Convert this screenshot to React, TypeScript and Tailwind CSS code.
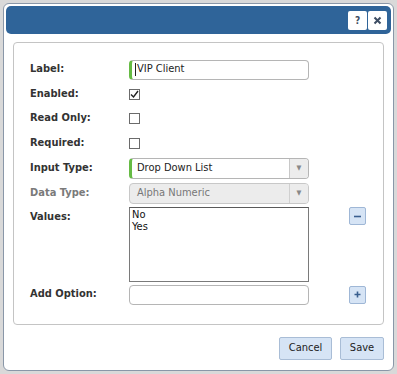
import React from 'react';

const font = { fontFamily: 'Tahoma, "DejaVu Sans Condensed", "DejaVu Sans", sans-serif' };

const Row = ({ label, h, muted, top, children, side }: any) => (
    <div className={`flex ${top ? 'items-start' : 'items-center'}`} style={{ height: h }}>
        <div className={`w-[99px] shrink-0 text-[11px] font-bold ${muted ? 'text-[#7a7a7a]' : 'text-[#333]'} ${top ? 'pt-[3px]' : ''}`}>
            {label}
        </div>
        <div className="w-[180px] shrink-0">{children}</div>
        {side && <div className={`ml-[40px] ${top ? 'pt-[1px]' : ''}`}>{side}</div>}
    </div>
);

const Check = ({ checked }: { checked?: boolean }) => (
    <div className="w-[11px] h-[11px] border border-[#6b6b6b] bg-white flex items-center justify-center">
        {checked && (
            <svg width="9" height="9" viewBox="0 0 9 9">
                <path d="M1 4.5 L3.5 7 L8 1" fill="none" stroke="#222" strokeWidth="1.4" />
            </svg>
        )}
    </div>
);

const Select = ({ value, disabled }: any) => (
    <div className={`flex h-[21px] rounded-[4px] border ${disabled ? 'border-[#c8c8c8] bg-[#ececec]' : 'border-[#b5b5b5] border-l-[3px] border-l-[#66bb44] bg-white'} overflow-hidden`}>
        <div className={`flex-1 flex items-center ${disabled ? 'pl-[7px] text-[#777]' : 'pl-[5px] text-[#222]'} text-[11px]`}>{value}</div>
        <div className={`w-[19px] border-l ${disabled ? 'border-[#d0d0d0]' : 'border-[#c8c8c8]'} bg-[#ececec] flex items-center justify-center text-[7px] text-[#888]`}>▼</div>
    </div>
);

const SmallBtn = ({ plus }: { plus?: boolean }) => (
    <div className="w-[17px] h-[18px] rounded-[2px] border border-[#9fb7d6] bg-[#d6e4f5] flex items-center justify-center">
        <svg width="9" height="9" viewBox="0 0 9 9">
            <path d={plus ? 'M4.5 1.5 V7.5 M1.5 4.5 H7.5' : 'M1 4.5 H8'} stroke="#3a5f8f" strokeWidth="1.6" />
        </svg>
    </div>
);

export default function App() {
    return (
        <div className="w-[397px] h-[374px] bg-[#d9d9d9] p-[3px]" style={font}>
            <div className="h-[368px] rounded-[6px] border border-[#8a97a8] bg-white p-[2px] flex flex-col">
                {/* title bar */}
                <div className="h-[28px] rounded-[5px] bg-[#2f6499] flex items-center justify-end pr-[4px] gap-[1px]">
                    <div className="w-[19px] h-[19px] rounded-[2px] bg-white flex items-center justify-center text-[10px] font-bold text-[#3d4d63]">?</div>
                    <div className="w-[19px] h-[19px] rounded-[2px] bg-white flex items-center justify-center">
                        <svg width="9" height="9" viewBox="0 0 9 9">
                            <path d="M1.5 1.5 L7.5 7.5 M7.5 1.5 L1.5 7.5" stroke="#3d4d63" strokeWidth="2" />
                        </svg>
                    </div>
                </div>

                {/* form panel */}
                <div className="mx-[7px] mt-[8px] h-[283px] rounded-[4px] border border-[#c4c4c4] pl-[16px] pt-[14px]">
                    <Row label="Label:" h={25}>
                        <div className="h-[20px] rounded-[4px] border border-[#b5b5b5] border-l-[3px] border-l-[#66bb44] flex items-center pl-[3px] text-[11px] text-[#222]">
                            <span className="w-px h-[13px] bg-[#222] mr-[1px]" />VIP Client
                        </div>
                    </Row>
                    <Row label="Enabled:" h={24}><Check checked /></Row>
                    <Row label="Read Only:" h={25}><Check /></Row>
                    <Row label="Required:" h={25}><Check /></Row>
                    <Row label="Input Type:" h={25}><Select value="Drop Down List" /></Row>
                    <Row label="Data Type:" h={25} muted><Select value="Alpha Numeric" disabled /></Row>
                    <Row label="Values:" h={77} top side={<SmallBtn />}>
                        <div className="mt-[1px] h-[75px] border border-[#7a7a7a] border-t-[#5a5a5a] pl-[2px] pt-[1px] text-[11px] leading-[12px] text-[#111]">
                            <div>No</div>
                            <div>Yes</div>
                        </div>
                    </Row>
                    <Row label="Add Option:" h={23} side={<SmallBtn plus />}>
                        <div className="h-[20px] rounded-[4px] border border-[#b5b5b5] bg-white" />
                    </Row>
                </div>

                {/* footer */}
                <div className="flex justify-end gap-[8px] mr-[7px] mt-[12px]">
                    <div className="w-[53px] h-[23px] rounded-[2px] border border-[#a9bdd6] bg-[#d6e4f5] flex items-center justify-center text-[11px] text-[#222]">Cancel</div>
                    <div className="w-[44px] h-[23px] rounded-[2px] border border-[#a9bdd6] bg-[#d6e4f5] flex items-center justify-center text-[11px] text-[#222]">Save</div>
                </div>
            </div>
        </div>
    );
}
